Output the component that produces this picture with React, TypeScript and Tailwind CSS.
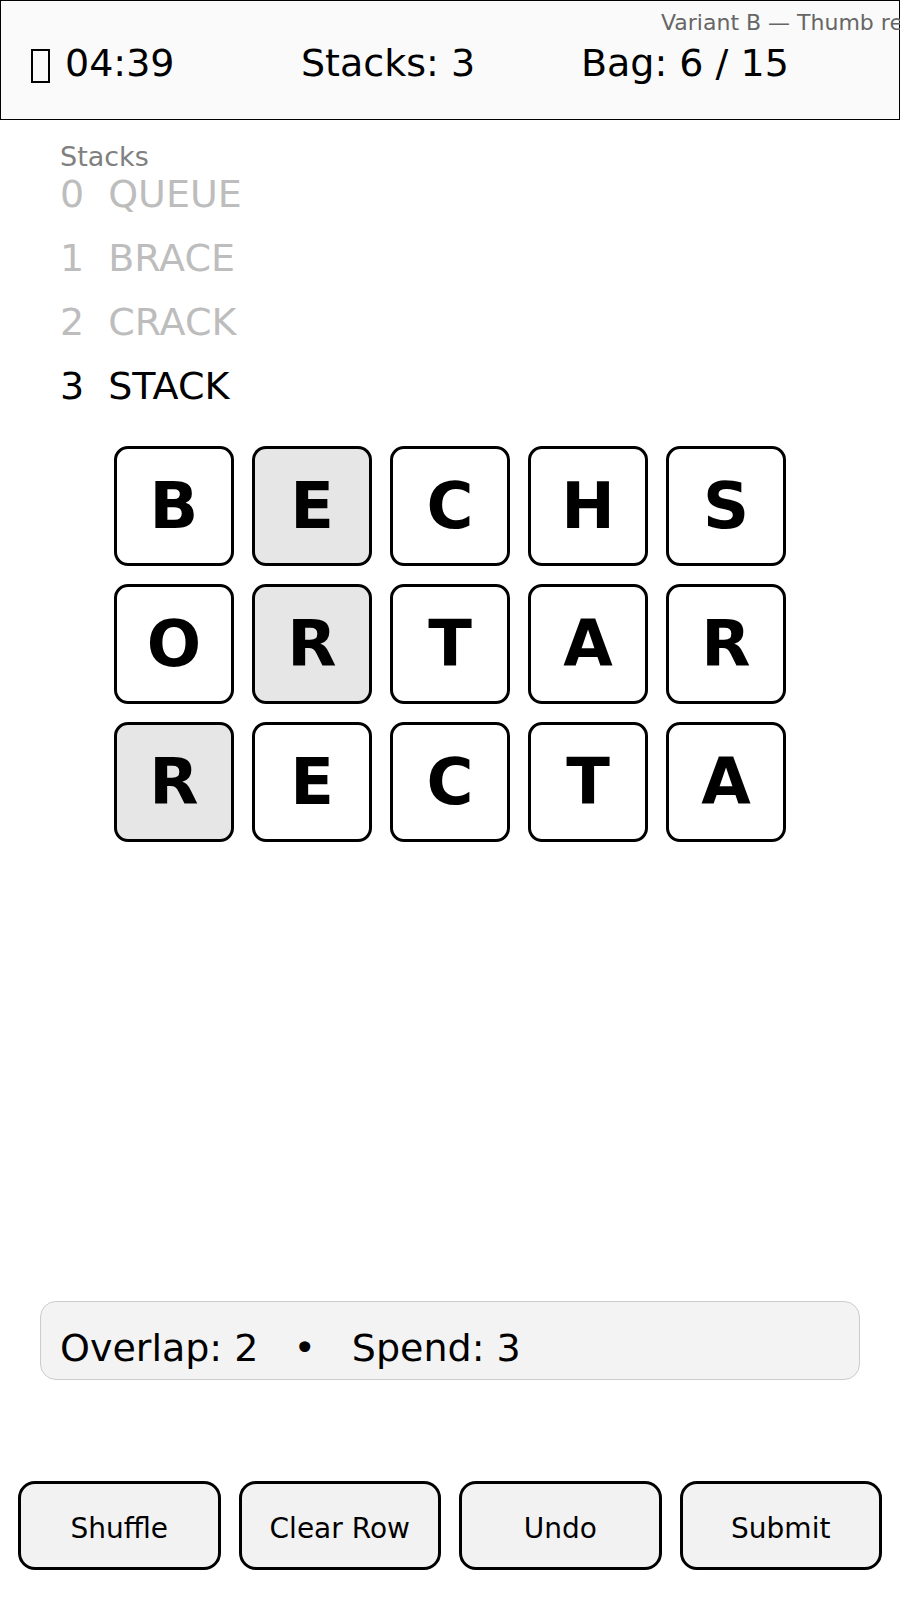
import React from "react";

const stacks: { word: string; active: boolean }[] = [
  { word: "QUEUE", active: false },
  { word: "BRACE", active: false },
  { word: "CRACK", active: false },
  { word: "STACK", active: true },
];

const grid: { ch: string; picked: boolean }[][] = [
  [
    { ch: "B", picked: false },
    { ch: "E", picked: true },
    { ch: "C", picked: false },
    { ch: "H", picked: false },
    { ch: "S", picked: false },
  ],
  [
    { ch: "O", picked: false },
    { ch: "R", picked: true },
    { ch: "T", picked: false },
    { ch: "A", picked: false },
    { ch: "R", picked: false },
  ],
  [
    { ch: "R", picked: true },
    { ch: "E", picked: false },
    { ch: "C", picked: false },
    { ch: "T", picked: false },
    { ch: "A", picked: false },
  ],
];

const actions = ["Shuffle", "Clear Row", "Undo", "Submit"];

const Tile: React.FC<{ ch: string; picked: boolean }> = ({ ch, picked }) => (
  <div
    className={
      "w-[120px] h-[120px] border-[3px] border-black rounded-[14px] flex items-center justify-center text-[64px] font-bold " +
      (picked ? "bg-[#e6e6e6]" : "bg-white")
    }
  >
    {ch}
  </div>
);

export default function App() {
  return (
    <div className="relative w-[900px] h-[1600px] overflow-hidden bg-white text-black font-['DejaVu_Sans',sans-serif]">
      {/* top bar */}
      <header className="relative h-[120px] border border-black bg-[#fafafa] flex items-center pl-[30px] pt-[5px] text-[38px] leading-[44px]">
        <span className="absolute left-[660px] top-[8px] text-[22px] leading-[28px] text-[#666] whitespace-nowrap">
          Variant B — Thumb reach
        </span>
        <div className="w-[270px] flex items-center gap-[15px] whitespace-nowrap">
          {/* missing-glyph box, as the timer icon shows in the original */}
          <span className="inline-block w-[19px] h-[34px] mt-[6px] border-2 border-black" />
          <span>04:39</span>
        </div>
        <div className="w-[280px] whitespace-nowrap">Stacks: 3</div>
        <div className="whitespace-nowrap">Bag: 6 / 15</div>
      </header>

      {/* stack history */}
      <section className="px-[60px] mt-[21px]">
        <div className="text-[27px] leading-[31px] text-[#808080]">Stacks</div>
        <div className="flex flex-col gap-[20px]">
          {stacks.map((s, i) => (
            <div
              key={s.word}
              className={
                "flex gap-[24px] text-[38px] leading-[44px] " +
                (s.active ? "text-black" : "text-[#bdbdbd]")
              }
            >
              <span>{i}</span>
              <span>{s.word}</span>
            </div>
          ))}
        </div>
      </section>

      {/* letter grid */}
      <div className="mt-[38px] flex flex-col items-center gap-[18px]">
        {grid.map((row, r) => (
          <div key={r} className="flex gap-[18px]">
            {row.map((t, c) => (
              <Tile key={c} ch={t.ch} picked={t.picked} />
            ))}
          </div>
        ))}
      </div>

      {/* overlap / spend */}
      <div className="mt-[459px] mx-[40px] h-[79px] border border-[#cccccc] rounded-[16px] bg-[#f3f3f3] pl-[19px] pt-[24px] flex text-[38px] leading-[44px] whitespace-nowrap">
        <span>Overlap: 2</span>
        <span className="ml-[35px] mr-[36px]">•</span>
        <span>Spend: 3</span>
      </div>

      {/* actions */}
      <div className="mt-[101px] px-[18px] flex gap-[18px]">
        {actions.map((a) => (
          <button
            key={a}
            className="flex-1 h-[89px] border-[3px] border-black rounded-[17px] bg-[#f2f2f2] pt-[6px] text-[28px] text-black"
          >
            {a}
          </button>
        ))}
      </div>
    </div>
  );
}
